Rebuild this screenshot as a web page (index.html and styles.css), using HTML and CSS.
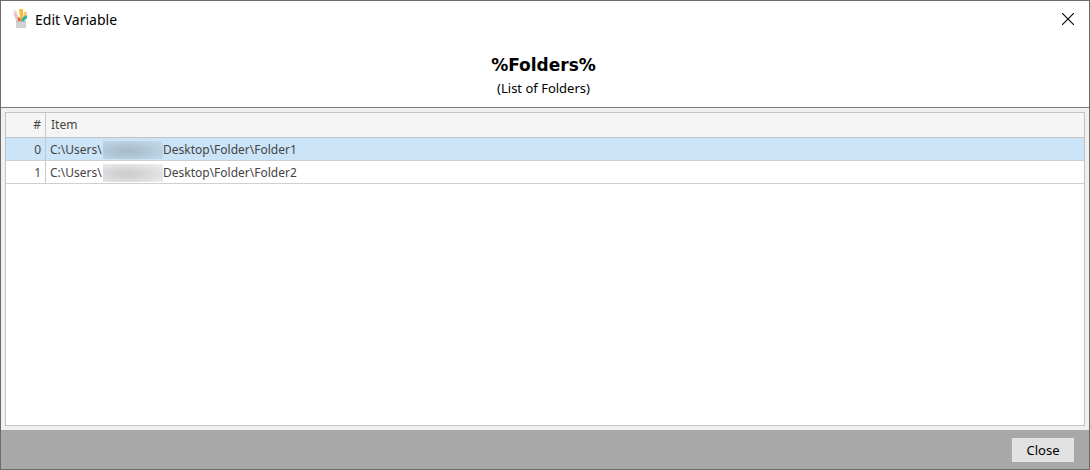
FILE: index.html
```html
<!DOCTYPE html>
<html lang="en">
<head>
<meta charset="utf-8">
<title>Edit Variable</title>
<link rel="stylesheet" href="styles.css">
</head>
<body>
<div class="dialog">
  <header class="titlebar">
    <svg class="app-icon" width="16" height="20" viewBox="0 0 16 20" aria-hidden="true">
      <path d="M0 2l3-1 4 11H3z" fill="#e2e2e2"/>
      <path d="M1 5l2-1 3 7-2 1z" fill="#f3b5a8"/>
      <path d="M6 0h4v5l-1 7H6l1-5z" fill="#f9bb35"/>
      <path d="M11 3h3l-1 4-3 2z" fill="#f6c765"/>
      <path d="M8 11l2-3 4-2v3l-4 4z" fill="#35b395"/>
      <path d="M5 8l2 1 1 4H5z" fill="#e96045"/>
      <path d="M3 12h10v7H3z" fill="#d2d2d2"/>
      <path d="M3 12h10v1H3z" fill="#b4b4b4"/>
    </svg>
    <span class="title">Edit Variable</span>
    <button class="close-x" type="button" aria-label="Close window">
      <svg width="12" height="12" viewBox="0 0 12 12" aria-hidden="true"><path d="M0 0l12 12M12 0L0 12" stroke="#000" stroke-width="1.1"/></svg>
    </button>
  </header>
  <section class="heading">
    <h1>%Folders%</h1>
    <p>(List of Folders)</p>
  </section>
  <main class="panel">
    <div class="grid">
      <table>
        <thead><tr><th class="num" scope="col">#</th><th scope="col">Item</th></tr></thead>
        <tbody>
          <tr class="selected"><td class="num">0</td><td><div class="path"><span class="prefix">C:\Users\</span><span class="redacted"></span><span>Desktop\Folder\Folder1</span></div></td></tr>
          <tr><td class="num">1</td><td><div class="path"><span class="prefix">C:\Users\</span><span class="redacted"></span><span>Desktop\Folder\Folder2</span></div></td></tr>
        </tbody>
      </table>
    </div>
  </main>
  <footer class="footer"><button class="close" type="button">Close</button></footer>
</div>
</body>
</html>
```
FILE: styles.css
```css
* { box-sizing: border-box; }
body {
  margin: 0;
  color: #000;
  font-family: "Noto Sans", "Open Sans", sans-serif;
}
.dialog {
  display: flex;
  flex-direction: column;
  min-height: 100vh;
  border: 1px solid #6b6b6e;
  background: #fff;
}
.titlebar {
  display: flex;
  align-items: center;
  height: 36px;
  padding: 0 15px 0 12px;
}
.app-icon { margin-right: 6px; }
.title {
  flex: 1;
  font-size: 14px;
}
.close-x {
  display: flex;
  padding: 0;
  border: 0;
  background: none;
}
.heading {
  height: 71px;
  padding: 16px 3px 0 0;
  border-bottom: 1px solid #7b7b7b;
  text-align: center;
}
.heading h1 {
  margin: 0;
  font-family: "DejaVu Sans", sans-serif;
  font-size: 17px;
  line-height: 24px;
}
.heading p {
  margin: 0;
  font-size: 13px;
  line-height: 22px;
}
.panel {
  display: flex;
  flex: 1;
  padding: 4px;
  background: #f0f0f0;
}
.grid {
  flex: 1;
  border: 1px solid #c3c3c3;
  background: #fff;
}
table {
  width: 100%;
  table-layout: fixed;
  border-collapse: separate;
  border-spacing: 0;
  color: #444;
  font-size: 12px;
  line-height: 20px;
}
th, td {
  height: 23px;
  padding: 2px 4px 0;
  border-bottom: 1px solid #d0d0d0;
  font-weight: 400;
  text-align: left;
}
th {
  height: 25px;
  padding: 0 5px;
  border-color: #c3c3c3;
  background: #f5f5f5;
}
.num {
  width: 40px;
  padding-right: 4px;
  border-right: 1px solid #c8c8c8;
  text-align: right;
}
.selected { background: #cce4f7; }
.path { display: flex; align-items: center; }
.prefix { width: 53px; white-space: nowrap; }
.redacted {
  width: 60px;
  height: 18px;
  background: radial-gradient(ellipse at 40% 55%, #cbcbcb, #d8d8d8 40%, #f1f1f1);
}
.selected .redacted {
  background: radial-gradient(ellipse at 40% 55%, #a6bac9, #b1c7d7 40%, #c5dded);
}
.footer {
  display: flex;
  align-items: center;
  justify-content: flex-end;
  height: 39px;
  padding: 0 15px;
  background: #a8a8a8;
}
.close {
  width: 62px;
  height: 24px;
  padding: 0;
  border: 1px solid #e6e6e6;
  background: #e1e1e1;
  color: #000;
  font: 13px/20px "Noto Sans", sans-serif;
}
```
